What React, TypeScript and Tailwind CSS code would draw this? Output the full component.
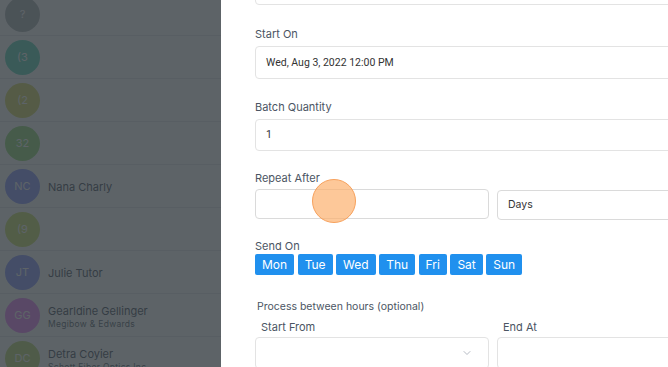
import { ChevronDown } from 'lucide-react';

type Contact = { initials: string; color: string; name?: string; company?: string };

const contacts: Contact[] = [
  { initials: '?', color: 'bg-[#a7adb1]' },
  { initials: '(3', color: 'bg-[#4fd1b5]' },
  { initials: '(2', color: 'bg-[#d4d85a]' },
  { initials: '32', color: 'bg-[#8ad86e]' },
  { initials: 'NC', color: 'bg-[#8090ff]', name: 'Nana Charly' },
  { initials: '(9', color: 'bg-[#c8e060]' },
  { initials: 'JT', color: 'bg-[#8090ff]', name: 'Julie Tutor' },
  { initials: 'GG', color: 'bg-[#e879f9]', name: 'Gearldine Gellinger', company: 'Megibow & Edwards' },
  { initials: 'DC', color: 'bg-[#b8d86a]', name: 'Detra Coyier', company: 'Schott Fiber Optics Inc' },
];

const days = ['Mon', 'Tue', 'Wed', 'Thu', 'Fri', 'Sat', 'Sun'];

const inputBox = 'rounded-[4px] border border-[#e3e3e3] bg-white';

/** Contact list behind the dimmed backdrop */
function ContactList() {
  return (
    <div className="relative w-[221px] shrink-0 overflow-hidden bg-white">
      <div className="-mt-[7px] flex flex-col">
        {contacts.map((c, i) => (
          <div key={i} className="flex h-[43px] items-center gap-[8px] border-b border-[#e5e7eb] pl-[5px]">
            <div className={`flex h-[35px] w-[35px] shrink-0 items-center justify-center rounded-full text-[11px] text-white ${c.color}`}>
              {c.initials}
            </div>
            {c.name && (
              <div className={`flex flex-col ${c.company ? 'mt-[4px]' : 'mt-[2px]'}`}>
                <span className="text-[11px] leading-[13px] text-[#374151]">{c.name}</span>
                {c.company && (
                  <span className="whitespace-nowrap text-[8.5px] leading-[12px] tracking-[0.3px] text-[#4b5563]">{c.company}</span>
                )}
              </div>
            )}
          </div>
        ))}
      </div>
      <div className="absolute inset-0 bg-[rgba(52,60,65,0.8)]" />
    </div>
  );
}

/** Scheduling form shown in the side drawer */
function ScheduleForm() {
  return (
    <div className="flex-1 overflow-hidden bg-white pl-[34px]">
      <div className="flex w-[476px] flex-col">
        <div className={`-mt-[28px] h-[33px] ${inputBox}`} />

        <label className="mt-[21px] text-[11px] leading-[16px] text-[#4b5563]">Start On</label>
        <div className={`mt-[4px] flex h-[33px] items-center px-[10px] font-['Roboto',sans-serif] text-[10.5px] text-[#333] ${inputBox}`}>
          Wed, Aug 3, 2022 12:00 PM
        </div>

        <label className="mt-[20px] text-[11px] leading-[16px] text-[#4b5563]">Batch Quantity</label>
        <div className={`mt-[4px] flex h-[32px] items-center px-[10px] font-['Roboto',sans-serif] text-[10.5px] text-[#333] ${inputBox}`}>
          1
        </div>

        <label className="mt-[19px] text-[11px] leading-[16px] text-[#4b5563]">Repeat After</label>
        <div className="relative mt-[3px] flex items-start gap-[8px]">
          <div className="h-[30px] w-[234px] rounded-[4px] border border-[#dadada] bg-white" />
          <div className="mt-[1px] flex h-[30px] flex-1 items-center rounded-[4px] border border-[#dadada] bg-white px-[10px] text-[10.5px] text-[#333]">
            Days
          </div>
          <div className="absolute left-[57px] top-[-10px] h-[44px] w-[44px] rounded-full border-[1.5px] border-[#f7a15c] bg-[rgba(252,176,110,0.7)]" />
        </div>

        <label className="mt-[18px] text-[11px] leading-[16px] text-[#4b5563]">Send On</label>
        <div className="flex gap-[3.5px]">
          {days.map((d) => (
            <button
              key={d}
              className="flex h-[21px] items-center rounded-[2px] bg-[#2090ee] px-[7px] font-['Inter',sans-serif] text-[12px] text-white"
            >
              {d}
            </button>
          ))}
        </div>

        <div className="mt-[24px] ml-[2px] text-[10.5px] leading-[16px] text-[#4b5563]">Process between hours (optional)</div>
        <div className="mt-[4px] grid grid-cols-2 gap-[8px]">
          <div className="flex flex-col">
            <span className="ml-[6px] text-[11px] leading-[16px] text-[#4b5563]">Start From</span>
            <div className={`mt-[2px] flex h-[32px] items-center justify-end pr-[15px] ${inputBox}`}>
              <ChevronDown size={12} strokeWidth={1.5} className="text-[#9ca3af]" />
            </div>
          </div>
          <div className="flex flex-col">
            <span className="ml-[6px] text-[11px] leading-[16px] text-[#4b5563]">End At</span>
            <div className={`mt-[2px] h-[32px] ${inputBox}`} />
          </div>
        </div>
      </div>
    </div>
  );
}

export default function App() {
  return (
    <div className="flex h-[367px] w-[668px] overflow-hidden bg-white font-['Inter',sans-serif]">
      <ContactList />
      <ScheduleForm />
    </div>
  );
}
